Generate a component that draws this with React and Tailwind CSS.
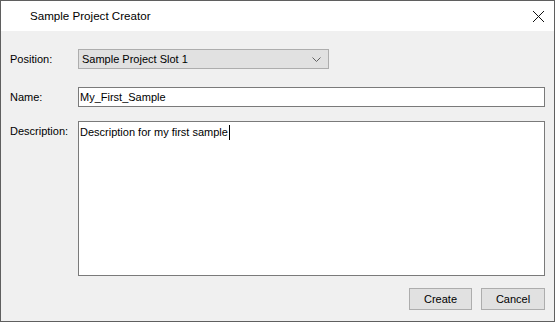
import React from "react";

function App() {
  return (
    <div
      className="w-[555px] h-[322px] flex flex-col border border-[#5f5f5f] bg-[#f0f0f0] text-[11px] text-black"
      style={{ fontFamily: '"Liberation Sans", Arial, sans-serif' }}
    >
      {/* Title bar */}
      <div className="h-[30px] bg-white flex items-center justify-between shrink-0">
        <span className="pl-[29px] text-[11.6px]">Sample Project Creator</span>
        <svg width="46" height="30" viewBox="0 0 46 30" className="mr-[-1px]">
          <path d="M24 10 L35 21 M35 10 L24 21" stroke="#111" strokeWidth="1" />
        </svg>
      </div>

      {/* Body */}
      <div className="flex-1 flex flex-col pl-[9px] pr-[9px] pt-[18px] pb-[11px]">
        <div className="flex items-center h-[20px]">
          <span className="w-[68px]">Position:</span>
          <div className="w-[251px] h-[20px] border border-[#adadad] bg-[#e1e1e1] flex items-center justify-between pl-[3px] pr-[7px]">
            <span>Sample Project Slot 1</span>
            <svg width="9" height="5" viewBox="0 0 9 5">
              <path d="M0.5 0.5 L4.5 4.5 L8.5 0.5" stroke="#606060" fill="none" strokeWidth="1" />
            </svg>
          </div>
        </div>

        <div className="flex items-center h-[20px] mt-[18px]">
          <span className="w-[68px]">Name:</span>
          <div className="flex-1 h-[20px] border border-[#7a7a7a] bg-white flex items-center pl-[1px]">
            My_First_Sample
          </div>
        </div>

        <div className="flex h-[155px] mt-[14px]">
          <span className="w-[68px] pt-[2px]">Description:</span>
          <div className="flex-1 border border-[#7a7a7a] bg-white pl-[1px] pt-[2px]">
            <span className="flex items-center">
              Description for my first sample
              <span className="inline-block w-[1px] h-[15px] bg-black ml-[1px]" />
            </span>
          </div>
        </div>

        <div className="flex justify-end gap-[9px] mt-[12px]">
          <button className="w-[63px] h-[22px] border border-[#adadad] bg-[#e1e1e1]">Create</button>
          <button className="w-[64px] h-[22px] border border-[#adadad] bg-[#e1e1e1]">Cancel</button>
        </div>
      </div>
    </div>
  );
}

export default App;
